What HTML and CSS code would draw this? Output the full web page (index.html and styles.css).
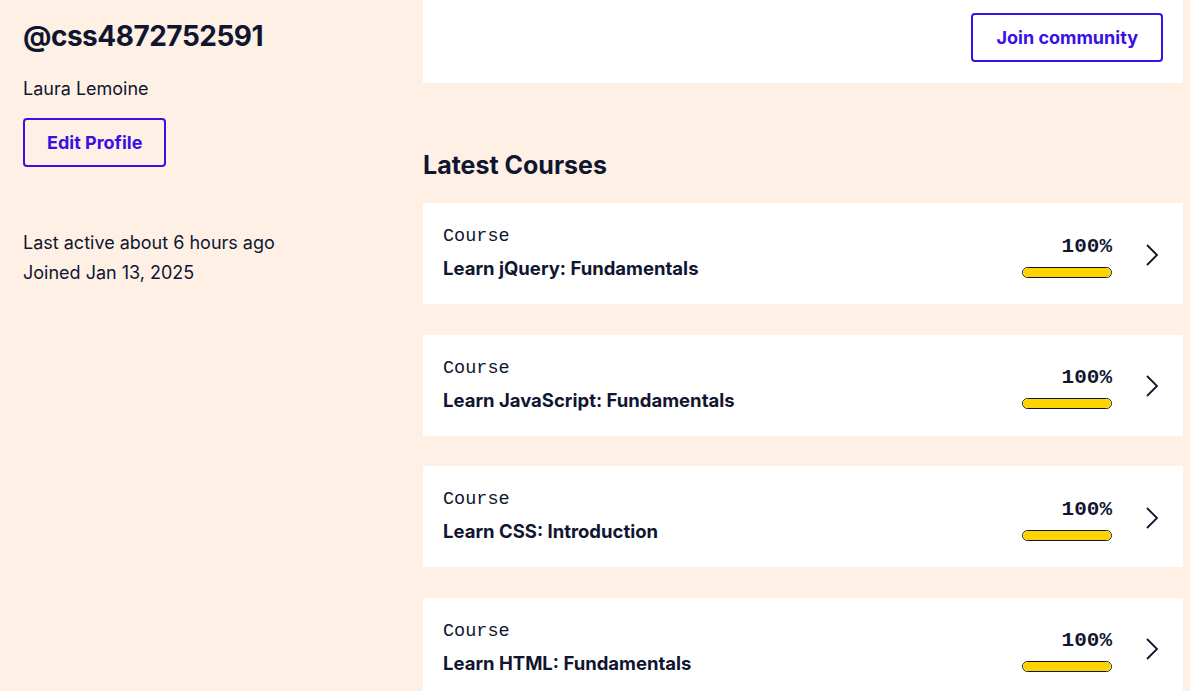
FILE: index.html
```html
<!DOCTYPE html>
<html lang="en">
<head>
<meta charset="utf-8">
<title>Profile</title>
<link rel="stylesheet" href="styles.css">
</head>
<body>
<div class="page">
  <aside class="side">
    <h1 class="handle">@css4872752591</h1>
    <p class="name">Laura Lemoine</p>
    <button class="btn">Edit Profile</button>
    <div class="meta">
      <p>Last active about 6 hours ago</p>
      <p>Joined Jan 13, 2025</p>
    </div>
  </aside>
  <main class="main">
    <div class="topcard">
      <button class="btn">Join community</button>
    </div>
    <h2 class="section-title">Latest Courses</h2>
    <div class="list">
      <a class="course">
        <div class="info"><span class="kind">Course</span><span class="title">Learn jQuery: Fundamentals</span></div>
        <div class="progress"><span class="pct">100%</span><span class="bar"><span class="fill" style="width:100%"></span></span></div>
        <svg class="chev" width="14" height="22" viewBox="0 0 14 22"><path d="M2 1 L12 11 L2 21" fill="none" stroke="#10162F" stroke-width="1.8"/></svg>
      </a>
      <a class="course">
        <div class="info"><span class="kind">Course</span><span class="title">Learn JavaScript: Fundamentals</span></div>
        <div class="progress"><span class="pct">100%</span><span class="bar"><span class="fill" style="width:100%"></span></span></div>
        <svg class="chev" width="14" height="22" viewBox="0 0 14 22"><path d="M2 1 L12 11 L2 21" fill="none" stroke="#10162F" stroke-width="1.8"/></svg>
      </a>
      <a class="course">
        <div class="info"><span class="kind">Course</span><span class="title">Learn CSS: Introduction</span></div>
        <div class="progress"><span class="pct">100%</span><span class="bar"><span class="fill" style="width:100%"></span></span></div>
        <svg class="chev" width="14" height="22" viewBox="0 0 14 22"><path d="M2 1 L12 11 L2 21" fill="none" stroke="#10162F" stroke-width="1.8"/></svg>
      </a>
      <a class="course">
        <div class="info"><span class="kind">Course</span><span class="title">Learn HTML: Fundamentals</span></div>
        <div class="progress"><span class="pct">100%</span><span class="bar"><span class="fill" style="width:100%"></span></span></div>
        <svg class="chev" width="14" height="22" viewBox="0 0 14 22"><path d="M2 1 L12 11 L2 21" fill="none" stroke="#10162F" stroke-width="1.8"/></svg>
      </a>
    </div>
  </main>
</div>
</body>
</html>
```

FILE: styles.css
```css
* { box-sizing: border-box; }
html, body { margin: 0; padding: 0; }
body {
  background: #FFF0E5;
  color: #10162F;
  font-family: "Inter", "Liberation Sans", sans-serif;
  overflow: hidden;
}
.page {
  display: grid;
  grid-template-columns: 423px 760px;
  height: 691px;
}
.side {
  padding: 16px 0 0 23px;
}
.handle {
  margin: 0;
  font-size: 28px;
  font-weight: 700;
  line-height: 40px;
  letter-spacing: -0.5px;
}
.name {
  margin: 22px 0 0;
  font-size: 18px;
  line-height: 22px;
}
.btn {
  display: inline-flex;
  align-items: center;
  justify-content: center;
  height: 49px;
  padding: 0 22px;
  border: 2px solid #3A10E5;
  border-radius: 4px;
  background: transparent;
  color: #3A10E5;
  font-family: inherit;
  font-size: 18px;
  font-weight: 700;
}
.side .btn { margin-top: 18px; }
.meta { margin-top: 61px; }
.meta p {
  margin: 0;
  font-size: 18px;
  line-height: 30px;
}
.topcard {
  background: #fff;
  height: 83px;
  display: flex;
  justify-content: flex-end;
  align-items: flex-start;
  padding: 13px 20px 0 0;
}
.topcard .btn { background: #fff; padding: 0 23px; }
.section-title {
  margin: 66px 0 0;
  font-size: 25px;
  font-weight: 700;
  line-height: 32px;
  height: 54px;
}
.list {
  display: flex;
  flex-direction: column;
  gap: 30.5px;
}
.course {
  display: flex;
  align-items: center;
  background: #fff;
  height: 101px;
  padding: 0 24px 0 20px;
}
.info {
  flex: 1;
  display: flex;
  flex-direction: column;
  gap: 10px;
  margin-top: -1px;
}
.kind {
  font-family: "Liberation Mono", monospace;
  font-size: 18.5px;
  line-height: 20px;
}
.title {
  font-size: 18.5px;
  font-weight: 700;
  line-height: 22px;
}
.progress {
  display: flex;
  flex-direction: column;
  align-items: flex-end;
  width: 90px;
  gap: 9px;
  margin-top: 6px;
}
.pct {
  font-family: "Liberation Mono", monospace;
  font-weight: 700;
  font-size: 21px;
  line-height: 22px;
}
.bar {
  display: block;
  width: 90px;
  height: 11px;
  border: 1px solid #10162F;
  border-radius: 6px;
  overflow: hidden;
  background: #fff;
}
.fill {
  display: block;
  height: 100%;
  background: #FFD300;
}
.chev { margin-left: 33px; margin-top: 2px; }
```
